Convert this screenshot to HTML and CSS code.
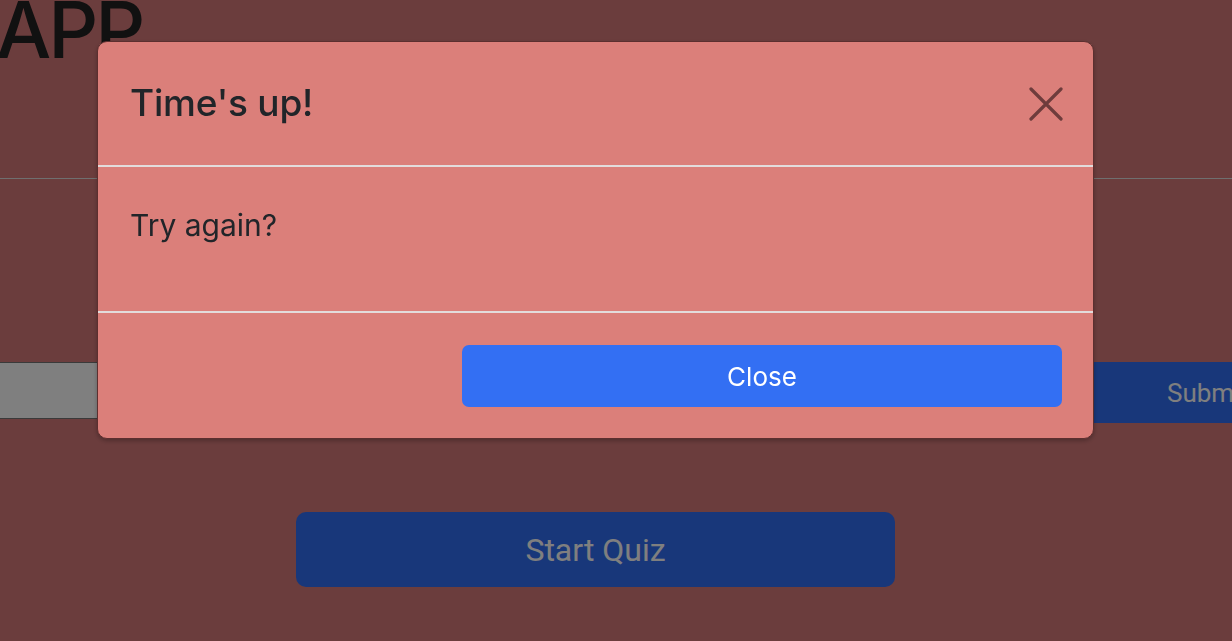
FILE: index.html
```html
<!DOCTYPE html>
<html lang="en">
<head>
<meta charset="utf-8">
<title>Quiz App</title>
<link rel="stylesheet" href="styles.css">
</head>
<body>
<main class="page">
  <h1 class="app-title">APP</h1>
  <hr class="divider">
  <div class="answer-row">
    <input class="answer-input" type="text">
    <button class="submit-btn">Submit</button>
  </div>
  <button class="start-btn">Start Quiz</button>
</main>
<div class="backdrop"></div>
<div class="modal">
  <div class="modal-header">
    <h2 class="modal-title">Time's up!</h2>
    <button class="modal-x" aria-label="Close">
      <svg width="34" height="34" viewBox="0 0 34 34"><path d="M2 2 L32 32 M32 2 L2 32" stroke="currentColor" stroke-width="3.2" stroke-linecap="round" fill="none"/></svg>
    </button>
  </div>
  <div class="modal-body">Try again?</div>
  <div class="modal-footer">
    <button class="close-btn">Close</button>
  </div>
</div>
</body>
</html>
```

FILE: styles.css
```css
html, body {
  margin: 0;
  padding: 0;
}
body {
  background: #d67a7a;
  font-family: Inter, "Noto Sans", sans-serif;
  overflow: hidden;
  height: 641px;
}
.page {
  display: flex;
  flex-direction: column;
}
.app-title {
  margin: -9px 0 0 -4px;
  font-size: 78px;
  font-weight: 500;
  line-height: 1;
  color: #222;
  letter-spacing: -3px;
}
.divider {
  margin: 109px 0 0;
  border: 0;
  border-top: 1px solid #dedede;
  height: 0;
}
.answer-row {
  display: flex;
  align-items: flex-start;
  margin-top: 183px;
  width: 1400px;
}
.answer-input {
  width: 1090px;
  height: 57px;
  box-sizing: border-box;
  margin: 0 0 0 -10px;
  background: #ffffff;
  border: 1px solid #747474;
}
.submit-btn {
  width: 236px;
  height: 61px;
  margin-left: 10px;
  border: 0;
  background: #306ef4;
  color: #ffffff;
  font-family: Roboto, Inter, sans-serif;
  font-size: 26px;
  padding: 0;
}
.start-btn {
  margin: 89px 0 0 296px;
  width: 599px;
  height: 75px;
  border: 0;
  border-radius: 10px;
  background: #306ef4;
  color: #ffffff;
  font-family: Roboto, Inter, sans-serif;
  font-size: 32px;
  align-self: flex-start;
}
.backdrop {
  position: fixed;
  inset: 0;
  background: rgba(0, 0, 0, 0.5);
}
.modal {
  position: fixed;
  left: 97px;
  top: 41px;
  width: 997px;
  box-sizing: border-box;
  background: #db7f7a;
  border: 1px solid #5c2f2f;
  border-radius: 10px;
  box-shadow: 0 2px 4px rgba(0, 0, 0, 0.25);
  color: #212529;
}
.modal-header {
  height: 123px;
  display: flex;
  align-items: center;
  justify-content: space-between;
  padding: 0 30px 0 32px;
  border-bottom: 2px solid #e2dcdc;
}
.modal-title {
  margin: 0;
  font-size: 37px;
  font-weight: 500;
  line-height: 1.2;
  letter-spacing: -0.2px;
}
.modal-x {
  background: none;
  border: 0;
  padding: 0;
  color: #6e3c3c;
  width: 34px;
  height: 34px;
  display: flex;
}
.modal-body {
  height: 146px;
  box-sizing: border-box;
  padding: 36px 32px 0;
  font-size: 30px;
  line-height: 1.5;
  border-bottom: 2px solid #e2dcdc;
}
.modal-footer {
  display: flex;
  justify-content: flex-end;
  padding: 32px 31px 31px;
}
.close-btn {
  width: 600px;
  height: 62px;
  border: 0;
  border-radius: 7px;
  background: #336ff3;
  color: #ffffff;
  font-family: Inter, sans-serif;
  font-size: 26px;
}
```
